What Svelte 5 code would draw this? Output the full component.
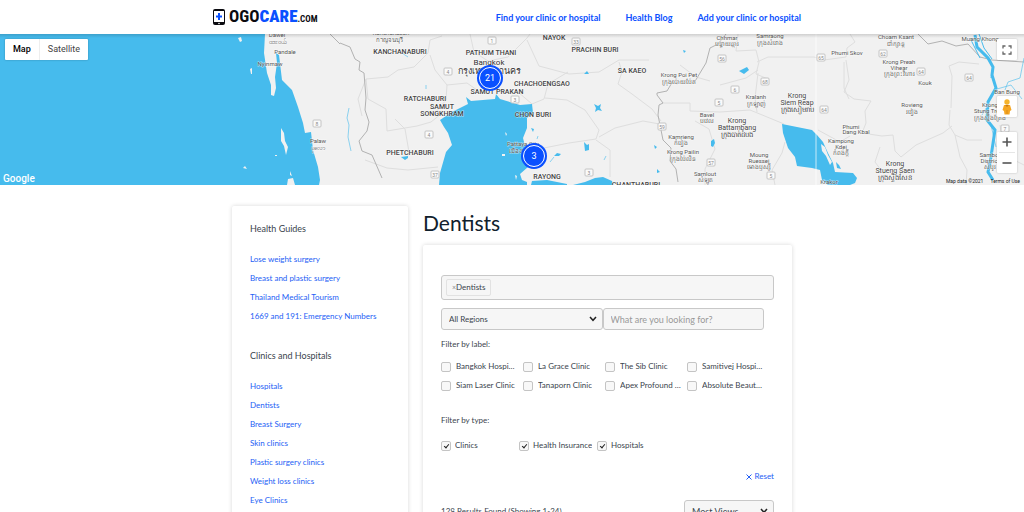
<script>
  const nav = ['Find your clinic or hospital', 'Health Blog', 'Add your clinic or hospital'];

  const groups = [
    {
      title: 'Health Guides',
      links: ['Lose weight surgery', 'Breast and plastic surgery', 'Thailand Medical Tourism', '1669 and 191: Emergency Numbers'],
    },
    {
      title: 'Clinics and Hospitals',
      links: ['Hospitals', 'Dentists', 'Breast Surgery', 'Skin clinics', 'Plastic surgery clinics', 'Weight loss clinics', 'Eye Clinics'],
    },
  ];

  const labels = [
    'Bangkok Hospital', 'La Grace Clinic', 'The Sib Clinic', 'Samitivej Hospital',
    'Siam Laser Clinic', 'Tanaporn Clinic', 'Apex Profound Beauty', 'Absolute Beauty Clinic',
  ];

  const types = ['Clinics', 'Health Insurance', 'Hospitals'];

  const provinces = [
    [400, 54, 'KANCHANABURI'], [491, 55, 'PATHUM THANI'], [554, 40, 'NAYOK'], [595, 52, 'PRACHIN BURI'],
    [632, 73, 'SA KAEO'], [542, 86, 'CHACHOENGSAO'], [497, 94, 'SAMUT PRAKAN'], [425, 101, 'RATCHABURI'],
    [442, 109, 'SAMUT'], [442, 116, 'SONGKHRAM'], [533, 117, 'CHON BURI'], [410, 155, 'PHETCHABURI'],
    [547, 179, 'RAYONG'], [636, 187, 'CHANTHABURI'],
  ];

  const towns = [
    [277, 37, 'Dawei'], [277, 44, 'ထားဝယ်'], [285, 54, 'Pandale'], [270, 66, 'Nyinmaw'], [318, 143, 'Palaw'], [318, 150, 'ပုလော'],
    [391, 35, 'Kanchanaburi'], [389, 42, 'กาญจนบุรี'],
    [523, 146, 'Pattaya City'], [523, 153, 'เมืองพัทยา'], [727, 40, 'Chhmar'], [727, 46, 'បន្ទាយឆ្មារ'],
    [770, 38, 'Samraong'], [770, 45, 'ក្រុងសំរោង'], [847, 55, 'Phumi Skov'], [896, 39, 'Choam Ksant'], [896, 46, 'ជាំក្សាន្ត'],
    [980, 41, 'Muang Khong'], [899, 64, 'Krong Preah'], [899, 70, 'Vihear'], [899, 76, 'ក្រុងព្រះវិហារ'], [925, 85, 'Kouk'],
    [679, 77, 'Krong Poi Pet'], [679, 84, 'ក្រុងប៉ោយប៉ែត'], [756, 99, 'Kralanh'], [756, 106, 'ក្រឡាញ់'],
    [707, 117, 'Bavel'], [707, 123, 'បវេល'], [912, 107, 'Rovieng'], [912, 114, 'រវៀង'], [1007, 94, 'Ban Bung'],
    [990, 107, 'Krong'], [990, 113, 'Stung Treng'], [990, 120, 'ក្រុងស្ទឹងត្រែង'], [851, 129, 'Phumi'], [856, 134, 'Dang Kbal'],
    [841, 143, 'Kampong'], [841, 149, 'Kdei'], [841, 155, 'កំពង់ក្តី'], [681, 139, 'Kamrieng'], [681, 145, 'កំរៀង'],
    [683, 154, 'Krong Pailin'], [683, 161, 'ក្រុងប៉ៃលិន'], [759, 157, 'Moung'], [759, 163, 'Ruessei'], [759, 169, 'មោងឫស្សី'],
    [705, 176, 'Samlout'], [705, 182, 'សំឡូត'], [829, 184, 'Krakor'], [990, 157, 'Sambor'], [990, 163, 'District'], [990, 169, 'សំបូរ'],
  ];

  const cities = [
    [797, 98, 'Krong'], [797, 105, 'Siem Reap'], [797, 112, 'ក្រុងសៀមរាប'], [737, 123, 'Krong'], [737, 130, 'Battambang'],
    [737, 137, 'ក្រុងបាត់ដំបង'], [895, 166, 'Krong'], [895, 173, 'Stueng Saen'], [895, 180, 'ក្រុងស្ទឹងសែន'],
  ];

  const roads = [
    [317, 124, '8'], [492, 41, '1'], [576, 42, '33'], [448, 72, '4'], [515, 100, '3'], [429, 135, '4'], [435, 175, '37'],
    [589, 173, '3'], [662, 127, '59'], [722, 59, '56'], [765, 82, '68'], [735, 90, '6'], [719, 103, '5'], [821, 58, '65'],
    [883, 54, '62'], [921, 72, '64'], [969, 78, '64'], [824, 110, '64'], [711, 163, '57'], [771, 176, '5'], [1005, 129, '7'],
  ];

  const pins = [
    { x: 47.85, y: 29.2, count: 21 },
    { x: 52.15, y: 80.8, count: 3 },
  ];
</script>

<header>
  <a class="logo" href="#home" aria-label="OGOCARE.COM">
    <svg width="12" height="16" viewBox="0 0 12 16" aria-hidden="true">
      <rect width="12" height="16" rx="2" fill="#0b0b10" />
      <rect x="1" y="2" width="10" height="11" fill="#fff" />
      <path d="M5 4h2v2.500h2v2H7V11H5V8.500H3v-2h2z" fill="#0a50ff" />
      <circle cx="6" cy="14.500" r="0.800" fill="#fff" />
    </svg>
    <span class="word">OGO<b>CARE</b><small>.COM</small></span>
  </a>
  <nav>
    {#each nav as item}<a href="#nav">{item}</a>{/each}
  </nav>
</header>

<section class="map" aria-label="Map">
  <svg class="canvas" viewBox="0 34 1024 151" preserveAspectRatio="xMidYMid slice">
    <rect y="34" width="1024" height="151" fill="#f1f1f1" />
    <g class="minor">
      <path d="M366 79l22-2 10-7 16-3 14-14 2-13 12-4M366 79l2 20 18 10 1 22 30-5 14-4 10-8M430 55l5 15 12 15 20-2 10 7M447 85l-1 15-10 12M470 34l4 18 14 9 20-4 19-19 3-4M527 40l12 26 30 8 30-2 20-12h30M518 92l14 12 12-5 4-15 20-12M545 98l22 2 18 10 14 20-3 9-27 4-30 6M599 137l16-9 28-7 22 4M596 140l14 10v27M619 62l3 10-4 12 14 10 20 15 9 12M366 79l-8 20 4 17M395 119l10 10 4 23M365 160l22 8 21 2 30-3" />
      <path d="M738 34l-2 17 20-1 3 12-3 12 12 5M757 62l11-5h46l10 3 22-3 1-9 8-6-5-8M846 60l3 20-5 12 10 7 17 2-6 10 1 12-4 10 20 3 11-1 2 16 6 6 15-12 27-12 9-7M951 108l1-32-3-10 10-4 20 2M950 110l-1 15 6 10 12 5h15M955 135l5 22 7 13-1 15M663 103h27v8l30 1 30-2 22 9 12 5M758 73l-3 25 2 14M695 121l14 8 6 20-10 20v16M775 185l-3-15 10-17 3-11M680 65l16 12 14 4M844 62v26l5 11M720 85l26-7 12-8M818 130l22 12 10-6M880 147l-5 15 9 12M1000 125l4 30 20 10" />
    </g>
    <path class="border" d="M340 43l10 4 5 12 5 3-1 8 5 3 2 25-1 12 4 12-2 9-8 10 3 10 10 4 10 23M663 103l-6-8v-2l10-2 6-10M663 103l-4 2-1 10 2 10 3 15 8 8-1 13 6 8 2 13M694 83l12-20 4-15 8-4 8-10M918 34l10 10 14-3 14 5 12-2 12 13 12 3 32 2M330 34l10 10" />
    <g class="water">
      <path d="M0 34h265l-1 19 3 20 4 12v10l3 1 2-8-1-11 2-14-1-10 3 2 3 25 10 10 6 17 5 16 2 10 6-1 2 18 5 17 2 13-1 5H0z" />
      <path d="M440 120l12-8 16-8-2-7 5 4 24-2 1-5 4 5 20 6 12-1 1 9-6 5v10l-4 10 2 8-3 7 2 10 4 4-8 7 2 6 5 2v3h-88l1-12 6-21 6-7-4-12-4-6z" />
      <path d="M531 185l1-4 15-1 20 4v1zM573 185l12-3 10-4 8-1 9 4 1 4z" />
      <path d="M782 124l30 6 5 5 6 7 5 11 5 10 2 9 18 1 4 5-2 5-5 2h-22l-6-5-2-10-8-2-15-2-2-9-7-9-5-15z" />
      <path d="M739 71l8-4 2 3-5 4zM711 141l3-2 1 4-2 4-2-1zM584 74l3-3 2 3zM594 104l4 2 3-2-1 4 2 3-4-1-3 2 1-4zM584 142l3 3 2-1v6l-4 1zM401 157l7-1v2l-3 2zM836 162l3 3 2 4-4-1zM554 156l3-3 4 1-2 2zM531 128l3 1-1 3zM654 145l3 2-2 2zM657 169l3 3-3 1zM683 50l3 1-2 2z" />
      <path class="stream thin" d="M349 108l-2 10 2 7-1 12 3 14M426 85v4M402 53l6 4M550 162l4-5M604 160l2-4M538 136l-1 3" />
      <path class="river" d="M975 35l2 12 11 11 5 9-1 8 4 13-8 14-1 18 8 10-3 20-2 13-2 9 5 8" />
      <path class="stream" d="M979 34l5 14 8 11M970 38l10 20M993 66l-2 12" />
      <path class="stream thin" d="M1024 58l-4 20-12 4-3 8M997 89l14-4 11 14M988 105l-6 10M991 125l5 22" />
    </g>
    <path fill="#f1f1f1" d="M281 128l3 5 1 8 3 6-2 8-2-9-3-5zM287 185l1-6 5-1 2 7zM243 168l2-2 2 3zM238 38l3-1 1 4-2 1zM250 69l2-1v6h-1zM290 171l2 5-2-1zM821 144l4 3 3 8 4 7-2 3-4-9-4-5zM515 175l2 1-1 4zM505 132l2 2-1 2zM275 155h2v1h-2zM502 154h3v2h-3z" />
    <path d="M816 34v151" stroke="#fff" stroke-opacity=".7" />
    {#each roads as [x, y, n]}
      <rect x={x - 4} y={y - 4} width="8" height="7" rx="1" fill="#fafafa" stroke="#c4c4c4" />
      <text class="road" {x} y={y + 2}>{n}</text>
    {/each}
    {#each towns as [x, y, name]}<text class="town" {x} {y}>{name}</text>{/each}
    {#each cities as [x, y, name]}<text class="city" {x} {y}>{name}</text>{/each}
    {#each provinces as [x, y, name]}<text class="province" {x} {y}>{name}</text>{/each}
    <text class="capital" x="489" y="65">Bangkok</text>
    <text class="capital thai" x="489" y="74">กรุงเทพมหานคร</text>
  </svg>

  {#each pins as pin}
    <button class="pin" style="left: {pin.x}%; top: {pin.y}%">{pin.count}</button>
  {/each}

  <div class="maptype"><button class="on">Map</button><button>Satellite</button></div>
  <button class="ctl full" aria-label="Toggle fullscreen">
    <svg width="10" height="10" viewBox="0 0 10 10"><path d="M1 3.500V1h2.500M6.500 1H9v2.500M9 6.500V9H6.500M3.500 9H1V6.500" fill="none" stroke="#666" stroke-width="1.300" /></svg>
  </button>
  <button class="ctl person" aria-label="Street View">
    <svg width="10" height="16" viewBox="0 0 10 16"><circle cx="5" cy="3" r="2.700" fill="#f5b32b" /><path d="M2 6h6l1.500 5-1.500 1-.5 3.500h-5L2 12 .5 11z" fill="#f5a623" /><path d="M3 6h4l-2 2zM4.700 11h.600v4h-.600z" fill="#c97a12" /></svg>
  </button>
  <div class="zoom">
    <button aria-label="Zoom in"><svg width="10" height="10" viewBox="0 0 10 10"><path d="M5 .5v9M.5 5h9" stroke="#555" stroke-width="1.600" /></svg></button>
    <button aria-label="Zoom out"><svg width="10" height="10" viewBox="0 0 10 10"><path d="M.5 5h9" stroke="#555" stroke-width="1.600" /></svg></button>
  </div>
  <span class="google">Google</span>
  <div class="credits"><span>Map data ©2021</span><a href="#terms">Terms of Use</a></div>
</section>

<div class="page">
  <aside>
    {#each groups as group}
      <section>
        <h2>{group.title}</h2>
        <ul>
          {#each group.links as link}<li><a href="#guide">{link}</a></li>{/each}
        </ul>
      </section>
    {/each}
  </aside>

  <main>
    <h1>Dentists</h1>
    <form class="card">
      <div class="tags"><button type="button" class="tag"><span>×</span>Dentists</button></div>
      <div class="search">
        <div class="pick">
          <select aria-label="Region"><option>All Regions</option></select>
          <svg width="8" height="6" viewBox="0 0 8 6" aria-hidden="true"><path d="M1 1l3 3.300L7 1" /></svg>
        </div>
        <input type="text" aria-label="Search" placeholder="What are you looking for?" />
      </div>
      <p>Filter by label:</p>
      <div class="checks labels">
        {#each labels as label}
          <label><input type="checkbox" /><span>{label}</span></label>
        {/each}
      </div>
      <p class="type">Filter by type:</p>
      <div class="checks types">
        {#each types as type}
          <label><input type="checkbox" checked /><span>{type}</span></label>
        {/each}
      </div>
      <button type="reset" class="reset">
        <svg width="6" height="6" viewBox="0 0 6 6" aria-hidden="true"><path d="M.5.5l5 5M5.500.5l-5 5" stroke="currentColor" /></svg>Reset
      </button>
      <div class="results">
        <span>128 Results Found (Showing 1-24)</span>
        <div class="pick sort">
          <select aria-label="Sort"><option>Most Views</option></select>
          <svg width="8" height="6" viewBox="0 0 8 6" aria-hidden="true"><path d="M1 1l3 3.300L7 1" /></svg>
        </div>
      </div>
    </form>
  </main>
</div>

<style>
  :global(body) {
    background: #fff;
    color: #3a444d;
    font: 8px/19px Lato, "Open Sans", sans-serif;
    overflow-x: hidden;
  }
  :global(*) { box-sizing: border-box; }
  a { color: #2460f5; text-decoration: none; }
  button, input, select { font: inherit; color: inherit; }
  button { border: 0; padding: 0; background: none; cursor: pointer; }

  header {
    position: relative;
    z-index: 1;
    display: flex;
    align-items: center;
    justify-content: space-between;
    max-width: 598px;
    height: 34px;
    margin: 0 auto;
    padding-right: 10px;
  }
  .logo {
    display: flex;
    align-items: center;
    gap: 4px;
    font: 700 17px/34px "Roboto Condensed", "Liberation Sans Narrow", "Liberation Sans", sans-serif;
    color: #0b0b10;
  }
  .word b { color: #0a50ff; }
  .word small { font-size: 9px; }
  nav { display: flex; gap: 25px; font-size: 9px; font-weight: 700; }
  nav a { color: #0a50ff; }

  .map { position: relative; height: 151px; overflow: hidden; font-family: Roboto, sans-serif; }
  .map::before {
    content: "";
    position: absolute;
    inset: 0 0 auto;
    height: 4px;
    background: linear-gradient(rgba(0, 0, 0, 0.14), transparent);
  }
  .canvas { display: block; width: 100%; height: 100%; }
  .minor { fill: none; stroke: #dedede; }
  .border { fill: none; stroke: #b2b2b2; }
  .water { fill: #46bbed; }
  .stream { fill: none; stroke: #46bbed; }
  .thin { stroke-opacity: 0.6; }
  .river { fill: none; stroke: #46bbed; stroke-width: 3; }
  text { text-anchor: middle; font-family: Roboto, "Noto Sans", sans-serif; paint-order: stroke; stroke: #fff; stroke-opacity: 0.6; }
  .province { font-size: 7px; font-weight: 500; fill: #444; }
  .town { font-size: 6px; fill: #555; }
  .city { font-size: 7px; fill: #444; }
  .road { font-size: 5px; fill: #888; }
  .capital { font-size: 8px; fill: #333; }
  .thai { font-size: 9px; }

  .pin {
    position: absolute;
    width: 22px;
    height: 22px;
    border: 1px solid #fff;
    border-radius: 50%;
    background: #0a50ff;
    box-shadow: 0 0 0 2px #0a50ff;
    color: #fff;
    font-size: 9px;
    line-height: 20px;
    transform: translate(-50%, -50%);
  }
  .maptype {
    position: absolute;
    left: 5px;
    top: 5px;
    display: flex;
    height: 21px;
    background: #fff;
    border-radius: 1px;
    box-shadow: 0 0 2px rgba(0, 0, 0, 0.3);
    font-size: 9px;
    color: #444;
  }
  .maptype button { padding: 0 8px; }
  .maptype .on { font-weight: 500; color: #000; border-right: 1px solid #eee; }
  .ctl, .zoom {
    position: absolute;
    right: 7px;
    display: flex;
    align-items: center;
    justify-content: center;
    width: 20px;
    height: 21px;
    background: #fff;
    border-radius: 1px;
    box-shadow: 0 0 2px rgba(0, 0, 0, 0.25);
  }
  .full { top: 5px; }
  .person { top: 62px; }
  .zoom { top: 98px; height: 41px; flex-direction: column; }
  .zoom button { display: grid; place-items: center; width: 16px; flex: 1; }
  .zoom button + button { border-top: 1px solid #e6e6e6; }
  .google {
    position: absolute;
    left: 3px;
    bottom: 0;
    color: #fff;
    font: 500 10px/13px Roboto, sans-serif;
  }
  .credits {
    position: absolute;
    right: 0;
    bottom: 0;
    display: flex;
    gap: 7px;
    padding: 0 4px;
    font-size: 5px;
    line-height: 7px;
    color: #222;
  }
  .credits a { color: #222; }

  .page {
    display: grid;
    grid-template-columns: 176px minmax(0, 1fr);
    gap: 15px;
    align-items: start;
    max-width: 560px;
    margin: 0 auto;
    padding-top: 21px;
  }
  aside, .card { background: #fff; border-radius: 2px; box-shadow: 0 0 4px rgba(0, 0, 0, 0.16); }
  aside { padding: 13px 18px 20px; }
  aside section + section { margin-top: 20px; }
  h2 { margin: 0 0 12px; font-size: 9px; font-weight: 400; line-height: 19px; }
  ul { margin: 0; padding: 0; list-style: none; }
  h1 { margin: 0 0 5px; font-size: 21px; font-weight: 400; line-height: 34px; color: #10202c; }

  .card { padding: 30px 18px; }
  .tags { display: flex; height: 25px; padding: 3px 4px; border: 1px solid #c8c8c8; border-radius: 3px; background: #f6f6f6; }
  .tag { padding: 0 5px; border: 1px solid #e2e2e2; border-radius: 2px; line-height: 15px; }
  .tag span { color: #888; font-size: 7px; }
  .search { display: grid; grid-template-columns: 1fr 1fr; width: 97%; margin-top: 8px; }
  .pick { position: relative; display: flex; }
  .pick svg { position: absolute; right: 6px; top: 8px; fill: none; stroke: #222; stroke-width: 1.500; pointer-events: none; }
  select, input[type="text"] {
    appearance: none;
    width: 100%;
    height: 22px;
    padding: 0 7px;
    border: 1px solid #c8c8c8;
    border-radius: 3px;
    background: #f6f6f6;
  }
  input[type="text"], .sort select { font-size: 9px; }
  input::placeholder { color: #999; opacity: 1; }
  p { margin: 5px 0 3px; line-height: 19px; }
  .checks { display: grid; }
  .labels { grid-template-columns: repeat(4, 82px); }
  .types { grid-template-columns: repeat(3, 78px); }
  label { display: flex; align-items: center; gap: 5px; min-width: 0; height: 19px; padding-right: 6px; }
  .types label { padding-right: 0; gap: 4px; }
  label span { overflow: hidden; text-overflow: ellipsis; white-space: nowrap; }
  label input {
    appearance: none;
    flex: none;
    width: 10px;
    height: 10px;
    margin: 0;
    border: 1px solid #c4c4c4;
    border-radius: 2px;
    background: #f8f8f8;
  }
  label input:checked::after {
    content: "";
    display: block;
    width: 2px;
    height: 4px;
    margin: 1px 3px;
    border: solid #222;
    border-width: 0 1px 1px 0;
    transform: rotate(40deg);
    box-sizing: content-box;
  }
  .type { margin: 16px 0 6px; }
  .reset { display: flex; align-items: center; gap: 2px; margin: 12px 0 0 auto; color: #2460f5; line-height: 19px; }
  .results { display: flex; align-items: center; justify-content: space-between; margin-top: 14px; }
  .sort { width: 90px; }
</style>
